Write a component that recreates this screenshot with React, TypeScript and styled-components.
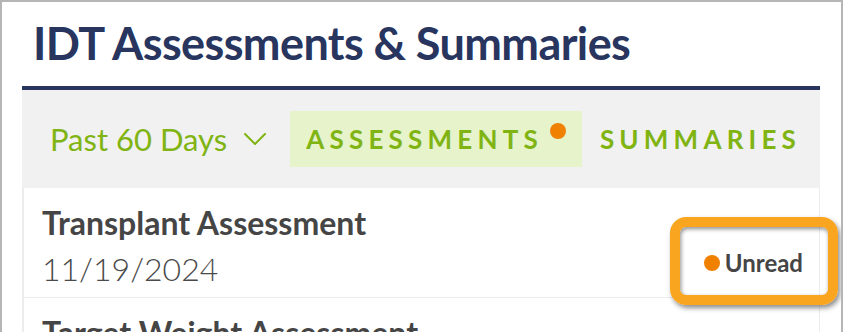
import styled, { createGlobalStyle } from 'styled-components';

const GlobalStyle = createGlobalStyle`
  html, body {
    margin: 0;
    padding: 0;
    background: #ffffff;
  }
  body {
    font-family: Lato, "Open Sans", "Liberation Sans", sans-serif;
    -webkit-font-smoothing: antialiased;
  }
`;

const Frame = styled.div`
  box-sizing: border-box;
  width: 843px;
  height: 332px;
  overflow: hidden;
  border: 2px solid #b5b5b5;
  border-bottom: none;
  padding: 14px 21px 0 20px;
`;

const Title = styled.h1`
  margin: 0 0 16px 11px;
  font-size: 45px;
  line-height: 54px;
  font-weight: 700;
  letter-spacing: -0.6px;
  color: #28355f;
  white-space: nowrap;
`;

const Panel = styled.section`
  border-top: 4px solid #28355f;
  background: #f1f1f1;
`;

const Toolbar = styled.div`
  display: flex;
  align-items: center;
  height: 98px;
  padding-left: 28px;
`;

const RangePicker = styled.button`
  display: flex;
  align-items: center;
  flex-shrink: 0;
  gap: 17px;
  margin-right: 24px;
  padding: 0;
  border: none;
  background: none;
  font-family: inherit;
  font-size: 31px;
  font-weight: 400;
  color: #80b413;
  white-space: nowrap;
  cursor: pointer;
`;

const Tab = styled.button<{ $active?: boolean }>`
  display: flex;
  align-items: center;
  flex-shrink: 0;
  height: 56px;
  padding: 0 16px;
  margin-right: 2px;
  border: none;
  background: ${({ $active }) => ($active ? '#e6f3cb' : 'transparent')};
  font-family: inherit;
  font-size: 26px;
  font-weight: 700;
  letter-spacing: 5.2px;
  color: #80b413;
  white-space: nowrap;
  cursor: pointer;
`;

const TabDot = styled.span`
  align-self: flex-start;
  width: 16px;
  height: 16px;
  margin: 12px 0 0 7px;
  border-radius: 50%;
  background: #f08000;
`;

const List = styled.div`
  background: #ffffff;
  border-left: 2px solid #ececec;
  border-right: 1px solid #ececec;
`;

const Row = styled.div`
  display: flex;
  align-items: flex-end;
  justify-content: space-between;
  padding: 12px 16px 5px 18px;
  border-bottom: 1px solid #ececec;
`;

const RowText = styled.div`
  display: flex;
  flex-direction: column;
`;

const RowTitle = styled.div`
  font-size: 32px;
  line-height: 46px;
  font-weight: 700;
  color: #454545;
  white-space: nowrap;
`;

const RowDate = styled.div`
  font-size: 32px;
  line-height: 46px;
  font-weight: 300;
  color: #4a4a4a;
`;

const Status = styled.div`
  position: relative;
  display: flex;
  align-items: center;
  gap: 5px;
  margin-bottom: 14px;
  font-size: 24px;
  line-height: 30px;
  font-weight: 700;
  color: #454545;

  &::after {
    content: '';
    position: absolute;
    top: -31px;
    left: -34px;
    right: -35px;
    bottom: -27px;
    border: 10px solid #f9a51f;
    border-radius: 16px;
    box-shadow: 2px 3px 5px rgba(0, 0, 0, 0.45), inset 1px 2px 4px rgba(0, 0, 0, 0.45);
    pointer-events: none;
  }
`;

const StatusDot = styled.span`
  width: 16px;
  height: 16px;
  border-radius: 50%;
  background: #f08000;
`;

function Chevron() {
  return (
    <svg width="22" height="12" viewBox="0 0 22 12" fill="none">
      <path d="M1 1l10 10L21 1" stroke="#80b413" strokeWidth="2" strokeLinecap="round" strokeLinejoin="round" />
    </svg>
  );
}

export default function App() {
  return (
    <>
      <GlobalStyle />
      <Frame>
        <Title>IDT Assessments &amp; Summaries</Title>
        <Panel>
          <Toolbar>
            <RangePicker>
              Past 60 Days
              <Chevron />
            </RangePicker>
            <Tab $active>
              ASSESSMENTS
              <TabDot />
            </Tab>
            <Tab>SUMMARIES</Tab>
          </Toolbar>
          <List>
            <Row>
              <RowText>
                <RowTitle>Transplant Assessment</RowTitle>
                <RowDate>11/19/2024</RowDate>
              </RowText>
              <Status>
                <StatusDot />
                Unread
              </Status>
            </Row>
            <Row>
              <RowText>
                <RowTitle>Target Weight Assessment</RowTitle>
                <RowDate>11/12/2024</RowDate>
              </RowText>
            </Row>
          </List>
        </Panel>
      </Frame>
    </>
  );
}
